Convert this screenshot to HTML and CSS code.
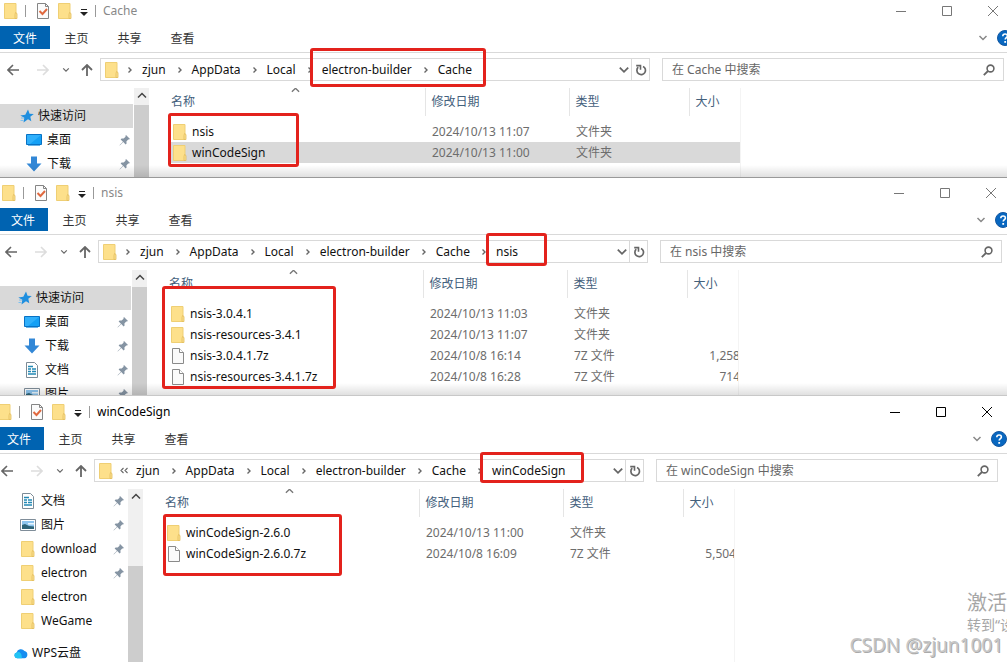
FILE: index.html
```html
<!DOCTYPE html>
<html lang="zh-CN">
<head>
<meta charset="utf-8">
<meta name="viewport" content="width=device-width, initial-scale=1">
<title>文件资源管理器</title>
<link rel="stylesheet" href="styles.css">
</head>
<body>
<svg class="sprite" aria-hidden="true">
  <symbol id="folder" viewBox="0 0 14 16"><path d="M.5.5h11.500v15H.5z" fill="#fde08b" stroke="#efcf74"/><path d="M11.500 9.500l1.500 1v5h-2v-4z" fill="#fbe08f" stroke="#e3bd5c" stroke-width=".8"/></symbol>
  <symbol id="file" viewBox="0 0 14 16"><path d="M1.500.5h7l4 4v11h-11z" fill="#fafafa" stroke="#8a8a8a"/><path d="M8.500.5v4h4" fill="#fff" stroke="#8a8a8a"/></symbol>
  <symbol id="check" viewBox="0 0 14 16"><path d="M1.500.5h8l3 3v12h-11z" fill="#fbfbfb" stroke="#858585"/><path d="M9.500.5v3h3" fill="none" stroke="#858585"/><path d="M3.500 8l3 3 4.500-5" fill="none" stroke="#e0693f" stroke-width="2"/></symbol>
  <symbol id="drop" viewBox="0 0 8 8"><path d="M1 1h6v1H1zM0 4h8L4 8z" fill="#222"/></symbol>
  <symbol id="left" viewBox="0 0 12 12"><path d="M12 6H1M6 1L1 6l5 5" fill="none" stroke="currentColor" stroke-width="1.600"/></symbol>
  <symbol id="right" viewBox="0 0 12 12"><path d="M0 6h11M6 1l5 5-5 5" fill="none" stroke="currentColor" stroke-width="1.600"/></symbol>
  <symbol id="up" viewBox="0 0 12 12"><path d="M6 12V1M1 6l5-5 5 5" fill="none" stroke="currentColor" stroke-width="1.800"/></symbol>
  <symbol id="down-s" viewBox="0 0 10 10"><path d="M1.500 3L5 6.500 8.500 3" fill="none" stroke="currentColor" stroke-width="1.500"/></symbol>
  <symbol id="up-s" viewBox="0 0 10 10"><path d="M1 6.500L5 2.500l4 4" fill="none" stroke="currentColor" stroke-width="1.500"/></symbol>
  <symbol id="next" viewBox="0 0 6 10"><path d="M1.500 2.500L4 5 1.500 7.500" fill="none" stroke="currentColor" stroke-width="1.400"/></symbol>
  <symbol id="more" viewBox="0 0 8 10"><path d="M3.500 2L1 4.500 3.500 7M7.500 2L5 4.500 7.500 7" fill="none" stroke="currentColor" stroke-width="1.100"/></symbol>
  <symbol id="refresh" viewBox="0 0 12 12"><path d="M3.200 3.200A4.300 4.300 0 1 0 8 2.400" fill="none" stroke="currentColor" stroke-width="1.700"/><path d="M1.200 1.600h4.300v4.200" fill="none" stroke="currentColor" stroke-width="1.600"/></symbol>
  <symbol id="search" viewBox="0 0 12 12"><circle cx="7.500" cy="4.500" r="3.400" fill="none" stroke="currentColor" stroke-width="1.600"/><path d="M5 7L.8 11.200" stroke="currentColor" stroke-width="1.800"/></symbol>
  <symbol id="min" viewBox="0 0 10 10"><path d="M0 5.500h10" stroke="currentColor"/></symbol>
  <symbol id="max" viewBox="0 0 10 10"><path d="M.5.5h9v9h-9z" fill="none" stroke="currentColor"/></symbol>
  <symbol id="close" viewBox="0 0 10 10"><path d="M0 0l10 10M10 0L0 10" stroke="currentColor"/></symbol>
  <symbol id="pin" viewBox="0 0 12 12"><path d="M7 1l4 4-1.200 .6-.6-.2-1.800 2 .2 2-1 1L4.300 8 1 11.300.5 11.500.7 11 4 7.700 1.600 5.400l1-1 2 .2 2-1.800L6.400 2z" fill="#8594a3"/></symbol>
  <symbol id="star" viewBox="0 0 14 14"><path d="M8 .5l1.600 4.200 4.200.3-3.500 2.700 1 4.500L8 10.300 3.500 13.500l.8-4.700L.3 6.500l5-.8z" fill="#1f8fdf"/><path d="M1 9h3M.5 11.500h3" stroke="#7cc0ee"/></symbol>
  <symbol id="desk" viewBox="0 0 16 14"><path d="M.5 1.500h15v10H.5z" fill="#14a0f5" stroke="#0872c4"/><path d="M1 2h14L4 11H1z" fill="#30b0fb"/><path d="M2 12.500h12" stroke="#6ab5e8"/></symbol>
  <symbol id="dl" viewBox="0 0 16 16"><path d="M5 .5h6v7h4.500L8 15.500.5 7.500H5z" fill="#3287d6"/></symbol>
  <symbol id="doc" viewBox="0 0 14 16"><path d="M1.500.5h8l3 3v12h-11z" fill="#fff" stroke="#7c8b96"/><path d="M3 4.500h5M3 7h3M7 7h4M3 9.500h3M7 9.500h4M3 12h8" stroke="#2389b5" stroke-width="1.400"/></symbol>
  <symbol id="pic" viewBox="0 0 16 14"><path d="M.5 1.500h15v11H.5z" fill="#fff" stroke="#7f8d99"/><path d="M2 3h12v8H2z" fill="#8ec5ee"/><path d="M2 7l3-1 4 2 5 .5V11H2z" fill="#2d6478"/><path d="M8 5h6v1.500H8z" fill="#e8f6ff"/></symbol>
  <symbol id="cloud" viewBox="0 0 16 14"><path d="M3.500 13A3.300 3.300 0 0 1 3 6.500a5 5 0 0 1 9-1.700A4.200 4.200 0 0 1 12 13z" fill="#168df0"/><path d="M3.500 13A3.300 3.300 0 0 1 3 6.500c3-2 6 0 6 6.500z" fill="#22c4f4"/></symbol>
  <symbol id="help" viewBox="0 0 16 16"><circle cx="8" cy="8" r="7.500" fill="#0867c0" stroke="#1357a0"/><path d="M5.800 6.200c0-3 4.600-2.900 4.600-.2 0 1.600-2.200 1.800-2.200 3.600" fill="none" stroke="#fff" stroke-width="1.600"/><path d="M7.300 11h1.800v1.800H7.300z" fill="#fff"/></symbol>
</svg>

<main class="desktop">
  <section class="window window-back" aria-label="Cache">
    <header class="titlebar">
      <svg class="i-folder"><use href="#folder"/></svg><span class="rule"></span>
      <button class="quick" aria-label="属性"><svg class="i-folder"><use href="#check"/></svg></button>
      <button class="quick" aria-label="新建文件夹"><svg class="i-folder"><use href="#folder"/></svg></button>
      <button class="quick-menu" aria-label="自定义"><svg class="i-8"><use href="#drop"/></svg></button><span class="rule"></span>
      <h2 class="title">Cache</h2>
      <div class="caption">
        <button aria-label="最小化"><svg class="i-10"><use href="#min"/></svg></button><button aria-label="最大化"><svg class="i-10"><use href="#max"/></svg></button><button aria-label="关闭"><svg class="i-10"><use href="#close"/></svg></button>
      </div>
    </header>
    <nav class="ribbon">
      <button class="tab tab-file">文件</button><button class="tab">主页</button><button class="tab">共享</button><button class="tab">查看</button>
      <button class="expand" aria-label="展开"><svg class="i-10"><use href="#down-s"/></svg></button><button class="help" aria-label="帮助"><svg class="i-16"><use href="#help"/></svg></button>
    </nav>
    <div class="navbar">
      <div class="history">
        <button aria-label="后退"><svg class="i-12"><use href="#left"/></svg></button><button aria-label="前进" disabled><svg class="i-12"><use href="#right"/></svg></button><button class="recent" aria-label="最近"><svg class="i-8"><use href="#down-s"/></svg></button><button aria-label="向上"><svg class="i-12"><use href="#up"/></svg></button>
      </div>
      <div class="address">
        <svg class="i-folder"><use href="#folder"/></svg>
        <ol class="crumbs">
          <li><svg class="sep"><use href="#next"/></svg><a href="#">zjun</a></li><li><svg class="sep"><use href="#next"/></svg><a href="#">AppData</a></li><li><svg class="sep"><use href="#next"/></svg><a href="#">Local</a></li><li><svg class="sep"><use href="#next"/></svg><a href="#">electron-builder</a></li><li><svg class="sep"><use href="#next"/></svg><a href="#">Cache</a></li>
        </ol>
        <button class="drop" aria-label="历史"><svg class="i-12"><use href="#down-s"/></svg></button><button class="refresh" aria-label="刷新"><svg class="i-12"><use href="#refresh"/></svg></button>
      </div>
      <label class="search"><input type="text" aria-label="搜索" placeholder="在 Cache 中搜索"><svg class="i-12"><use href="#search"/></svg></label>
    </div>
    <div class="body">
      <aside class="sidebar">
        <ul class="tree tree-top">
          <li class="root current"><svg class="i-14"><use href="#star"/></svg><a href="#">快速访问</a></li>
          <li><svg class="i-16"><use href="#desk"/></svg><a href="#">桌面</a><svg class="pin"><use href="#pin"/></svg></li>
          <li><svg class="i-16"><use href="#dl"/></svg><a href="#">下载</a><svg class="pin"><use href="#pin"/></svg></li>
        </ul>
        <div class="scroll"><svg class="i-10"><use href="#up-s"/></svg><div class="thumb"></div></div>
      </aside>
      <div class="list">
        <table class="files">
          <colgroup><col class="c-name"><col class="c-date"><col class="c-type"><col class="c-size"></colgroup>
          <thead><tr><th>名称<svg class="sort"><use href="#up-s"/></svg></th><th>修改日期</th><th>类型</th><th>大小</th></tr></thead>
          <tbody>
            <tr><td><span class="name"><svg class="i-folder"><use href="#folder"/></svg>nsis</span></td><td>2024/10/13 11:07</td><td>文件夹</td><td></td></tr>
            <tr class="selected"><td><span class="name"><svg class="i-folder"><use href="#folder"/></svg>winCodeSign</span></td><td>2024/10/13 11:00</td><td>文件夹</td><td></td></tr>
          </tbody>
        </table>
      </div>
      <div class="preview"></div>
    </div>
    <div class="mark mark-cache-path"></div>
    <div class="mark mark-cache-files"></div>
  </section>

  <section class="window window-middle" aria-label="nsis">
    <header class="titlebar">
      <svg class="i-folder"><use href="#folder"/></svg><span class="rule"></span>
      <button class="quick" aria-label="属性"><svg class="i-folder"><use href="#check"/></svg></button>
      <button class="quick" aria-label="新建文件夹"><svg class="i-folder"><use href="#folder"/></svg></button>
      <button class="quick-menu" aria-label="自定义"><svg class="i-8"><use href="#drop"/></svg></button><span class="rule"></span>
      <h2 class="title">nsis</h2>
      <div class="caption">
        <button aria-label="最小化"><svg class="i-10"><use href="#min"/></svg></button><button aria-label="最大化"><svg class="i-10"><use href="#max"/></svg></button><button aria-label="关闭"><svg class="i-10"><use href="#close"/></svg></button>
      </div>
    </header>
    <nav class="ribbon">
      <button class="tab tab-file">文件</button><button class="tab">主页</button><button class="tab">共享</button><button class="tab">查看</button>
      <button class="expand" aria-label="展开"><svg class="i-10"><use href="#down-s"/></svg></button><button class="help" aria-label="帮助"><svg class="i-16"><use href="#help"/></svg></button>
    </nav>
    <div class="navbar">
      <div class="history">
        <button aria-label="后退"><svg class="i-12"><use href="#left"/></svg></button><button aria-label="前进" disabled><svg class="i-12"><use href="#right"/></svg></button><button class="recent" aria-label="最近"><svg class="i-8"><use href="#down-s"/></svg></button><button aria-label="向上"><svg class="i-12"><use href="#up"/></svg></button>
      </div>
      <div class="address">
        <svg class="i-folder"><use href="#folder"/></svg>
        <ol class="crumbs">
          <li><svg class="sep"><use href="#next"/></svg><a href="#">zjun</a></li><li><svg class="sep"><use href="#next"/></svg><a href="#">AppData</a></li><li><svg class="sep"><use href="#next"/></svg><a href="#">Local</a></li><li><svg class="sep"><use href="#next"/></svg><a href="#">electron-builder</a></li><li><svg class="sep"><use href="#next"/></svg><a href="#">Cache</a></li><li><svg class="sep"><use href="#next"/></svg><a href="#">nsis</a></li>
        </ol>
        <button class="drop" aria-label="历史"><svg class="i-12"><use href="#down-s"/></svg></button><button class="refresh" aria-label="刷新"><svg class="i-12"><use href="#refresh"/></svg></button>
      </div>
      <label class="search"><input type="text" aria-label="搜索" placeholder="在 nsis 中搜索"><svg class="i-12"><use href="#search"/></svg></label>
    </div>
    <div class="body">
      <aside class="sidebar">
        <ul class="tree tree-top">
          <li class="root current"><svg class="i-14"><use href="#star"/></svg><a href="#">快速访问</a></li>
          <li><svg class="i-16"><use href="#desk"/></svg><a href="#">桌面</a><svg class="pin"><use href="#pin"/></svg></li>
          <li><svg class="i-16"><use href="#dl"/></svg><a href="#">下载</a><svg class="pin"><use href="#pin"/></svg></li>
          <li><svg class="i-16"><use href="#doc"/></svg><a href="#">文档</a><svg class="pin"><use href="#pin"/></svg></li>
          <li><svg class="i-16"><use href="#pic"/></svg><a href="#">图片</a><svg class="pin"><use href="#pin"/></svg></li>
        </ul>
        <div class="scroll"><svg class="i-10"><use href="#up-s"/></svg><div class="thumb"></div></div>
      </aside>
      <div class="list">
        <table class="files">
          <colgroup><col class="c-name"><col class="c-date"><col class="c-type"><col class="c-size"></colgroup>
          <thead><tr><th>名称<svg class="sort"><use href="#up-s"/></svg></th><th>修改日期</th><th>类型</th><th>大小</th></tr></thead>
          <tbody>
            <tr><td><span class="name"><svg class="i-folder"><use href="#folder"/></svg>nsis-3.0.4.1</span></td><td>2024/10/13 11:03</td><td>文件夹</td><td></td></tr>
            <tr><td><span class="name"><svg class="i-folder"><use href="#folder"/></svg>nsis-resources-3.4.1</span></td><td>2024/10/13 11:07</td><td>文件夹</td><td></td></tr>
            <tr><td><span class="name"><svg class="i-folder"><use href="#file"/></svg>nsis-3.0.4.1.7z</span></td><td>2024/10/8 16:14</td><td>7Z 文件</td><td>1,258</td></tr>
            <tr><td><span class="name"><svg class="i-folder"><use href="#file"/></svg>nsis-resources-3.4.1.7z</span></td><td>2024/10/8 16:28</td><td>7Z 文件</td><td>714</td></tr>
          </tbody>
        </table>
      </div>
      <div class="preview"></div>
    </div>
    <div class="mark mark-nsis-path"></div>
    <div class="mark mark-nsis-files"></div>
  </section>

  <section class="window window-front" aria-label="winCodeSign">
    <header class="titlebar">
      <svg class="i-folder"><use href="#folder"/></svg><span class="rule"></span>
      <button class="quick" aria-label="属性"><svg class="i-folder"><use href="#check"/></svg></button>
      <button class="quick" aria-label="新建文件夹"><svg class="i-folder"><use href="#folder"/></svg></button>
      <button class="quick-menu" aria-label="自定义"><svg class="i-8"><use href="#drop"/></svg></button><span class="rule"></span>
      <h2 class="title">winCodeSign</h2>
      <div class="caption">
        <button aria-label="最小化"><svg class="i-10"><use href="#min"/></svg></button><button aria-label="最大化"><svg class="i-10"><use href="#max"/></svg></button><button aria-label="关闭"><svg class="i-10"><use href="#close"/></svg></button>
      </div>
    </header>
    <nav class="ribbon">
      <button class="tab tab-file">文件</button><button class="tab">主页</button><button class="tab">共享</button><button class="tab">查看</button>
      <button class="expand" aria-label="展开"><svg class="i-10"><use href="#down-s"/></svg></button><button class="help" aria-label="帮助"><svg class="i-16"><use href="#help"/></svg></button>
    </nav>
    <div class="navbar">
      <div class="history">
        <button aria-label="后退"><svg class="i-12"><use href="#left"/></svg></button><button aria-label="前进" disabled><svg class="i-12"><use href="#right"/></svg></button><button class="recent" aria-label="最近"><svg class="i-8"><use href="#down-s"/></svg></button><button aria-label="向上"><svg class="i-12"><use href="#up"/></svg></button>
      </div>
      <div class="address">
        <svg class="i-folder"><use href="#folder"/></svg>
        <ol class="crumbs">
          <li><svg class="sep"><use href="#more"/></svg><a href="#">zjun</a></li><li><svg class="sep"><use href="#next"/></svg><a href="#">AppData</a></li><li><svg class="sep"><use href="#next"/></svg><a href="#">Local</a></li><li><svg class="sep"><use href="#next"/></svg><a href="#">electron-builder</a></li><li><svg class="sep"><use href="#next"/></svg><a href="#">Cache</a></li><li><svg class="sep"><use href="#next"/></svg><a href="#">winCodeSign</a></li>
        </ol>
        <button class="drop" aria-label="历史"><svg class="i-12"><use href="#down-s"/></svg></button><button class="refresh" aria-label="刷新"><svg class="i-12"><use href="#refresh"/></svg></button>
      </div>
      <label class="search"><input type="text" aria-label="搜索" placeholder="在 winCodeSign 中搜索"><svg class="i-12"><use href="#search"/></svg></label>
    </div>
    <div class="body">
      <aside class="sidebar">
        <ul class="tree">
          <li><svg class="i-16"><use href="#doc"/></svg><a href="#">文档</a><svg class="pin"><use href="#pin"/></svg></li>
          <li><svg class="i-16"><use href="#pic"/></svg><a href="#">图片</a><svg class="pin"><use href="#pin"/></svg></li>
          <li><svg class="i-16"><use href="#folder"/></svg><a href="#">download</a><svg class="pin"><use href="#pin"/></svg></li>
          <li><svg class="i-16"><use href="#folder"/></svg><a href="#">electron</a><svg class="pin"><use href="#pin"/></svg></li>
          <li><svg class="i-16"><use href="#folder"/></svg><a href="#">electron</a></li>
          <li><svg class="i-16"><use href="#folder"/></svg><a href="#">WeGame</a></li>
          <li class="root spaced"><svg class="i-14"><use href="#cloud"/></svg><a href="#">WPS云盘</a></li>
        </ul>
        <div class="scroll scroll-down"><svg class="i-10"><use href="#up-s"/></svg><div class="thumb"></div></div>
      </aside>
      <div class="list">
        <table class="files">
          <colgroup><col class="c-name"><col class="c-date"><col class="c-type"><col class="c-size"></colgroup>
          <thead><tr><th>名称<svg class="sort"><use href="#up-s"/></svg></th><th>修改日期</th><th>类型</th><th>大小</th></tr></thead>
          <tbody>
            <tr><td><span class="name"><svg class="i-folder"><use href="#folder"/></svg>winCodeSign-2.6.0</span></td><td>2024/10/13 11:00</td><td>文件夹</td><td></td></tr>
            <tr><td><span class="name"><svg class="i-folder"><use href="#file"/></svg>winCodeSign-2.6.0.7z</span></td><td>2024/10/8 16:09</td><td>7Z 文件</td><td>5,504</td></tr>
          </tbody>
        </table>
      </div>
      <div class="preview"></div>
    </div>
    <div class="mark mark-sign-path"></div>
    <div class="mark mark-sign-files"></div>
  </section>
  <div class="activate"><p class="activate-title">激活</p><p class="activate-text">转到“设</p></div>
  <p class="watermark">CSDN @zjun1001</p>
</main>
</body>
</html>
```
FILE: styles.css
```css
* { box-sizing: border-box; }

body {
  margin: 0;
  font: 12px/16px "Noto Sans", "Noto Sans CJK SC", sans-serif;
  color: #111;
  background: #fff;
}

button {
  display: flex;
  align-items: center;
  justify-content: center;
  padding: 0;
  border: 0;
  background: none;
  color: inherit;
  font: inherit;
}

a { color: inherit; text-decoration: none; }
ul, ol, p, h2 { margin: 0; padding: 0; list-style: none; }
svg { display: block; flex: none; }

.sprite { position: absolute; width: 0; height: 0; }
.i-8 { width: 8px; height: 8px; }
.i-10 { width: 10px; height: 10px; }
.i-12 { width: 12px; height: 12px; }
.i-14 { width: 14px; height: 14px; }
.i-16 { width: 16px; height: 16px; }
.i-folder { width: 14px; height: 16px; }

.desktop {
  position: relative;
  display: grid;
  grid-template-rows: 177fr 218fr 267fr;
  height: 100vh;
  overflow: hidden;
}

.window {
  position: relative;
  display: flex;
  flex-direction: column;
  min-height: 0;
  background: #fff;
  overflow: hidden;
}
.window-back { margin-right: -8px; }
.window-back .titlebar { margin-top: -4px; }
.window-middle { margin: 0 -6px 0 -2px; border-top: 1px solid #999; }
.window-front { margin: 0 -2px 0 -6px; padding-top: 1px; border-top: 1px solid #c8c8c8; }

.window-back::after,
.window-middle::after {
  content: "";
  position: absolute;
  left: 0;
  right: 0;
  bottom: 0;
  height: 12px;
  background: linear-gradient(rgba(0, 0, 0, 0), rgba(0, 0, 0, .12));
}

/* Title bar */
.titlebar { display: flex; flex: none; align-items: center; height: 30px; padding-left: 4px; }
.rule { width: 1px; height: 12px; margin: 0 7px; background: #999; }
.titlebar .rule:first-of-type { margin: 0 10px 0 7px; }
.quick { margin-right: 8px; }
.quick-menu { margin-top: 2px; }
.title { font-size: 12px; font-weight: 400; color: #888; }
.caption { display: flex; margin-left: auto; margin-right: -1px; color: #777; }
.caption button { width: 46px; height: 30px; }
.window-front .title, .window-front .caption { color: #000; }

/* Ribbon */
.ribbon { display: flex; flex: none; height: 27px; padding-right: 2px; border-bottom: 1px solid #d9d9d9; }
.tab { width: 53px; height: 23px; padding-top: 2px; color: #333; }
.tab-file { width: 50px; background: #0063b1; color: #fff; }
.expand { width: 12px; height: 24px; margin: 0 8px 0 auto; color: #888; }
.help { width: 16px; height: 24px; }

/* Navigation */
.navbar { display: flex; flex: none; height: 35px; padding: 5px 11px 7px 7px; }
.history { display: flex; align-items: center; flex: none; width: 93px; color: #666; }
.history button { margin-right: 18px; }
.history button:disabled { color: #ddd; }
.history .recent { margin: 0 11px 0 -5px; }
.history button:last-child { margin-right: 0; }
.address { display: flex; align-items: center; flex: 544 1 0; min-width: 0; padding-left: 4px; border: 1px solid #d9d9d9; }
.crumbs { display: flex; flex: 1; min-width: 0; margin-left: 7px; }
.crumbs li { display: flex; align-items: center; margin-right: 10px; white-space: nowrap; }
.sep { width: 8px; height: 10px; margin-right: 8px; color: #666; }
.drop { width: 14px; color: #666; }
.refresh { width: 18px; height: 21px; border-left: 1px solid #d9d9d9; color: #666; }
.search { display: flex; align-items: center; flex: 323 1 0; min-width: 0; margin-left: 12px; padding: 0 8px 0 9px; border: 1px solid #d9d9d9; color: #666; }
.search input { flex: 1; min-width: 0; padding: 0; border: 0; outline: 0; background: none; font: inherit; }
.search input::placeholder { color: #666; opacity: 1; }

/* Folder tree */
.body { display: flex; flex: 1; min-height: 0; }
.sidebar { display: flex; flex: none; width: 150px; }
.tree { flex: 1; }
.tree-top { padding-top: 16px; }
.tree li { display: flex; align-items: center; gap: 5px; height: 24px; padding: 0 3px 0 26px; }
.tree .root { gap: 4px; padding-left: 20px; }
.tree .current { margin-right: 1px; background: #d9d9d9; }
.tree .spaced { margin-top: 8px; }
.pin { width: 12px; height: 12px; margin-left: auto; }
.scroll { display: flex; flex-direction: column; align-items: center; flex: none; width: 15px; margin-right: 1px; padding-top: 3px; gap: 4px; background: #f0f0f0; color: #444; }
.thumb { flex: 1; width: 15px; background: #cdcdcd; }
.scroll-down { gap: 64px; }

/* File list */
.list { flex: 572 1 0; min-width: 0; padding-left: 18px; overflow: hidden; }
.preview { flex: 274 1 0; border-left: 1px solid #f4f4f4; }
.files { width: 574px; table-layout: fixed; border-collapse: collapse; white-space: nowrap; }
.c-name { width: 257px; }
.c-date { width: 144px; }
.c-type { width: 120px; }
.c-size { width: 53px; }
.files th { position: relative; height: 28px; padding: 0 6px; border-left: 1px solid #e5e5e5; text-align: left; font-weight: 400; color: #43607c; }
.files th:first-child { padding-left: 3px; border-left: 0; }
.files tbody::before { content: ""; display: block; height: 5px; }
.files td { height: 21px; padding: 0 7px; color: #6d6d6d; }
.files td:first-child { padding-left: 5px; color: #111; }
.files td:last-child { padding: 0; text-align: right; }
.selected { background: #d9d9d9; }
.name { display: flex; align-items: center; gap: 5px; }
.sort { position: absolute; top: -2px; left: 50%; width: 9px; height: 9px; margin-left: -5px; color: #777; }

/* Red annotations over the windows */
.mark { position: absolute; z-index: 1; border: 3px solid #e3221c; border-radius: 3px; }
.mark-cache-path { left: 310px; top: 48px; width: 176px; height: 39px; }
.mark-cache-files { left: 168px; top: 113px; width: 131px; height: 54px; }
.mark-nsis-path { left: 488px; top: 55px; width: 61px; height: 33px; }
.mark-nsis-files { left: 164px; top: 108px; width: 174px; height: 103px; }
.mark-sign-path { left: 486px; top: 56px; width: 104px; height: 31px; }
.mark-sign-files { left: 169px; top: 118px; width: 179px; height: 62px; }

/* Desktop watermarks */
.activate { position: absolute; left: calc(100% - 40px); bottom: 28px; color: #a6a6a6; white-space: nowrap; }
.activate-title { font-size: 20px; line-height: 26px; }
.activate-text { font-size: 14px; line-height: 18px; }
.watermark { position: absolute; right: 4px; bottom: 6px; font-size: 19px; line-height: 22px; color: #c6c6c6; text-shadow: 1px 1px 0 #aaa; }
```
